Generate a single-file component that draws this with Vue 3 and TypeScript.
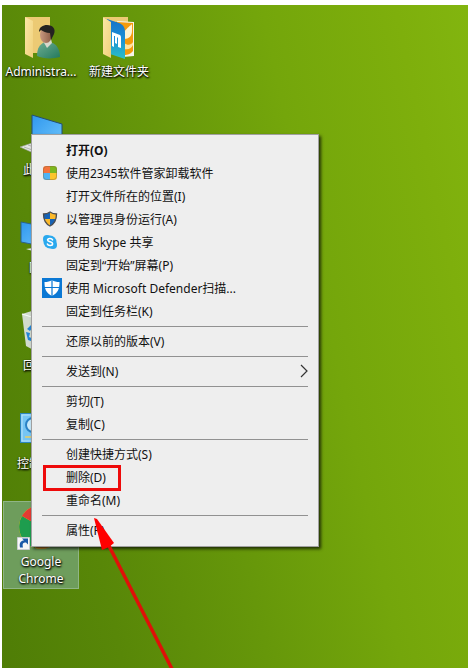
<script setup lang="ts">
type IconName =
  | 'user-folder' | 'app-folder' | 'computer' | 'network' | 'recycle' | 'control' | 'chrome'

interface Shortcut {
  label: string
  icon: IconName
  selected?: boolean
}

interface MenuItem {
  label: string
  icon?: 'manager' | 'uac' | 'skype' | 'defender'
  bold?: boolean
  submenu?: boolean
  marked?: boolean
}

const columns: Shortcut[][] = [
  [
    { label: 'Administra...', icon: 'user-folder' },
    { label: '此电脑', icon: 'computer' },
    { label: '网络', icon: 'network' },
    { label: '回收站', icon: 'recycle' },
    { label: '控制面板', icon: 'control' },
    { label: 'Google Chrome', icon: 'chrome', selected: true },
  ],
  [{ label: '新建文件夹', icon: 'app-folder' }],
]

const groups: MenuItem[][] = [
  [
    { label: '打开(O)', bold: true },
    { label: '使用2345软件管家卸载软件', icon: 'manager' },
    { label: '打开文件所在的位置(I)' },
    { label: '以管理员身份运行(A)', icon: 'uac' },
    { label: '使用 Skype 共享', icon: 'skype' },
    { label: '固定到“开始”屏幕(P)' },
    { label: '使用 Microsoft Defender扫描...', icon: 'defender' },
    { label: '固定到任务栏(K)' },
  ],
  [{ label: '还原以前的版本(V)' }],
  [{ label: '发送到(N)', submenu: true }],
  [{ label: '剪切(T)' }, { label: '复制(C)' }],
  [{ label: '创建快捷方式(S)' }, { label: '删除(D)', marked: true }, { label: '重命名(M)' }],
  [{ label: '属性(R)' }],
]
</script>

<template>
  <main class="desktop">
    <div class="shortcuts">
      <div v-for="(column, c) in columns" :key="c" class="column">
        <button
          v-for="item in column"
          :key="item.label"
          type="button"
          class="shortcut"
          :class="{ selected: item.selected }"
        >
          <svg class="picture" viewBox="0 0 48 48" aria-hidden="true">
            <defs>
              <linearGradient id="flap" x1="0" y1="0" x2="1" y2="1">
                <stop offset="0" stop-color="#fbe7a6" />
                <stop offset="1" stop-color="#f0d07a" />
              </linearGradient>
              <linearGradient id="screen" x1="0" y1="0" x2="1" y2="1">
                <stop offset="0" stop-color="#2f97ee" />
                <stop offset="1" stop-color="#6cc4fb" />
              </linearGradient>
              <linearGradient id="page" x1="0" y1="0" x2="0" y2="1">
                <stop offset="0" stop-color="#1672c8" />
                <stop offset="0.5" stop-color="#1c8fd6" />
                <stop offset="1" stop-color="#2cc0c4" />
              </linearGradient>
              <linearGradient id="coat" x1="0" y1="0" x2="1" y2="1">
                <stop offset="0" stop-color="#6fae92" />
                <stop offset="1" stop-color="#23795d" />
              </linearGradient>
              <linearGradient id="face" x1="0" y1="0" x2="1" y2="0">
                <stop offset="0" stop-color="#c99a80" />
                <stop offset="1" stop-color="#8a5b45" />
              </linearGradient>
            </defs>
            <g v-if="item.icon === 'user-folder'">
              <path d="M8 4h25v36H15z" fill="#ecca74" />
              <path d="M8 4l8 4v37l-8-4z" fill="url(#flap)" />
              <path d="M20 43c0-8 3-12 8-14l8 1c5 3 7 8 7 14-7 2-17 2-23-1z" fill="url(#coat)" />
              <path d="M26 28l4 7 5-5-1-4h-6z" fill="#d9d8cc" />
              <ellipse cx="29" cy="22" rx="6" ry="8" fill="url(#face)" />
              <path d="M22 19c0-5 4-7 8-7 6 0 9 4 7 9l-3 6-1-7c-4 0-7-2-9-3z" fill="#252321" />
            </g>
            <g v-else-if="item.icon === 'app-folder'">
              <path d="M8 4h25v5H15z" fill="#ecca74" />
              <path d="M22 8l17 1v34l-11 1z" fill="#f7f4ea" />
              <path d="M22 9l16 1v28c-3 4-7 4-10 4z" fill="#f59a0c" />
              <path d="M29 19c4-5 6-6 8-8v7c0 5-3 8-8 8z" fill="#fff3d2" />
              <path d="M29 30c4 3 7 2 9-1v3c-2 4-5 5-9 4z" fill="#ffe3a0" />
              <path d="M12 6l12 4c5 2 6 5 6 10v26l-15-5z" fill="url(#page)" />
              <path d="M17 33V19l8 3c1 1 1 2 1 3v10l-3-1V25l-1-1v7l-2-1v-7l-1 0v11z" fill="#fff" />
              <path d="M8 4l8 5v36l-8-4z" fill="url(#flap)" />
            </g>
            <g v-else-if="item.icon === 'computer'">
              <path d="M3 36l12-4 20 7-14 5z" fill="#e4e6e2" stroke="#99a197" stroke-width=".6" />
              <path d="M7 36l14 5M11 34l15 5" stroke="#99a197" stroke-width=".7" />
              <path d="M15 4l30 9v20l-30-3z" fill="url(#screen)" stroke="#234e73" stroke-width="1" />
            </g>
            <g v-else-if="item.icon === 'network'">
              <path d="M4 13l26 5v20L4 33z" fill="url(#screen)" stroke="#2b638d" stroke-width="1" />
              <path d="M16 35v4l-7 1 10 3 8-3-5-1v-3z" fill="#dfe5e4" />
            </g>
            <g v-else-if="item.icon === 'recycle'">
              <path d="M5 7l13-4 24 4-5 36-15 3L9 39z" fill="#dce3e1" opacity=".92" />
              <path d="M5 7l16 5 21-5M21 12l1 34" fill="none" stroke="#f5faf8" stroke-width="1.2" />
              <path d="M10 22l5-5 6 6-3 1-3-3-2 3zM9 25l4 1-1 4 5 2v3l-6-2z" fill="#2285d6" />
            </g>
            <g v-else-if="item.icon === 'control'">
              <rect x="3.500" y="8.500" width="41" height="29" fill="#76c5f4" stroke="#2c86bd" />
              <rect x="5" y="10" width="38" height="26" fill="none" stroke="#b9e4fb" />
              <circle cx="16" cy="20" r="7" fill="#c9eafa" stroke="#2a82c5" stroke-width="2" />
              <path d="M8 32h11" stroke="#e9cd62" stroke-width="1.500" />
              <path d="M28 18h12M28 24h12" stroke="#fff" stroke-width="2" />
            </g>
            <g v-else>
              <circle cx="24" cy="24" r="22" fill="#fbc116" />
              <path d="M24 24L5 13a22 22 0 0 0 13 32z" fill="#1e9d4e" />
              <path d="M24 24L5 13a22 22 0 0 1 38 0z" fill="#e33b32" />
              <path d="M18 44.500l10-3 4 3a22 22 0 0 1-14 0z" fill="#b77c2b" />
              <circle cx="24" cy="24" r="10" fill="#fff" />
              <circle cx="24" cy="24" r="8" fill="#3f7de0" />
              <path d="M.5 34.500h12v12H.5z" fill="#f7f7f7" stroke="#c9cdd0" />
              <path d="M3 44.500c-1-5 1-7 4-7l-2-2h6v6l-2-2c-3 0-4 1-3 5z" fill="#1b5aa8" />
            </g>
          </svg>
          <span class="caption">{{ item.label }}</span>
        </button>
      </div>
    </div>

    <div class="menu" role="menu">
      <div v-for="(group, g) in groups" :key="g" class="group" role="group">
        <button
          v-for="item in group"
          :key="item.label"
          type="button"
          role="menuitem"
          class="item"
          :class="{ bold: item.bold, marked: item.marked }"
        >
          <span class="slot">
            <svg v-if="item.icon === 'manager'" width="16" height="16" viewBox="0 0 16 16">
              <clipPath id="tile"><rect x="1" y="1" width="14" height="14" rx="3" /></clipPath>
              <g clip-path="url(#tile)">
                <path d="M1 1h7v7H1z" fill="#f4733c" />
                <path d="M8 1h7v7H8z" fill="#7cb81e" />
                <path d="M1 8h7v7H1z" fill="#4fb4f5" />
                <path d="M8 8h7v7H8z" fill="#fcc52b" />
              </g>
              <rect x="1.500" y="1.500" width="13" height="13" rx="3" fill="none" stroke="#8a6a3a" stroke-opacity=".45" />
            </svg>
            <svg v-else-if="item.icon === 'uac'" width="16" height="16" viewBox="0 0 16 16">
              <clipPath id="guard"><path d="M8 1c2 1.500 4 2 6.500 2 0 6-1.500 9.500-6.500 12C3 12.500 1.500 9 1.500 3 4 3 6 2.500 8 1z" /></clipPath>
              <g clip-path="url(#guard)">
                <path d="M0 0h8v8H0zM8 8h8v8H8z" fill="#1663b5" />
                <path d="M8 0h8v8H8zM0 8h8v8H0z" fill="#fbb92a" />
              </g>
              <path d="M8 1c2 1.500 4 2 6.500 2 0 6-1.500 9.500-6.500 12C3 12.500 1.500 9 1.500 3 4 3 6 2.500 8 1z" fill="none" stroke="#4c4d50" stroke-width="1.300" />
            </svg>
            <svg v-else-if="item.icon === 'skype'" width="16" height="16" viewBox="0 0 16 16">
              <circle cx="5" cy="5" r="4" fill="#2aa9ee" />
              <circle cx="11" cy="11" r="4" fill="#2aa9ee" />
              <circle cx="8" cy="8" r="6.500" fill="#2aa9ee" />
              <path d="M10.500 5.800C9.800 4 5.600 4 5.600 6.100c0 2.200 5 1.300 5 3.700 0 2.300-4.500 2.300-5.200.3" fill="none" stroke="#fff" stroke-width="1.600" stroke-linecap="round" />
            </svg>
            <svg v-else-if="item.icon === 'defender'" width="20" height="20" viewBox="0 0 20 20">
              <path d="M0 0h20v20H0z" fill="#0b78d4" />
              <path d="M10 2c2 1.500 4.500 2 7.500 2 0 7-1.500 11-7.500 14C4 15 2.500 11 2.500 4c3 0 5.500-.5 7.500-2z" fill="#fff" />
              <path d="M10 2v16M2 9.500h16" stroke="#0b78d4" stroke-width="1.200" />
            </svg>
          </span>
          <span>{{ item.label }}</span>
          <svg v-if="item.submenu" class="chevron" width="10" height="14" viewBox="0 0 10 14">
            <path d="M2 1l6 6-6 6" fill="none" stroke="#333" stroke-width="1.200" />
          </svg>
        </button>
      </div>
    </div>

    <svg class="arrow" width="82" height="151" viewBox="0 0 82 151" aria-hidden="true">
      <path d="M15 26l64 125" stroke="#e01008" stroke-width="3.500" />
      <path d="M1 0l3 1 17 24-5 4-7 3z" fill="#f00" />
    </svg>
  </main>
</template>

<style>
body {
  margin: 0;
  background: #fff;
}
</style>

<style scoped>
.desktop {
  position: relative;
  box-sizing: border-box;
  min-height: calc(100vh - 5px);
  margin: 5px 0 0 2px;
  padding: 6px 1px;
  overflow: hidden;
  background: linear-gradient(78deg, #4f7d06 0%, #588708 20%, #66970a 44%, #74a60b 66%, #7eaf0c 88%, #82b50f 100%);
  color: #111;
  font-family: "Noto Sans", "Noto Sans CJK SC", sans-serif;
  font-size: 12px;
}

.shortcuts {
  display: flex;
  gap: 2px;
}

.column {
  display: flex;
  flex-direction: column;
  gap: 10px;
}

.shortcut {
  box-sizing: border-box;
  display: flex;
  flex-direction: column;
  align-items: center;
  gap: 2px;
  width: 76px;
  height: 88px;
  padding: 1px 0 0;
  border: 1px solid transparent;
  background: none;
  color: #fff;
  font: inherit;
  line-height: 17px;
  text-shadow: 1px 1px 2px #000, 0 1px 2px #000;
}

.shortcut.selected {
  border-color: #8fb585;
  background: #6e9d5c;
}

.picture {
  flex: none;
  width: 48px;
  height: 48px;
}

.menu {
  position: absolute;
  top: 129px;
  left: 29px;
  box-sizing: border-box;
  width: 288px;
  padding: 4px 0;
  border: 1px solid #a0a0a0;
  background: #eee;
  box-shadow: 2px 2px 3px rgba(0, 0, 0, 0.7);
}

.group + .group::before {
  content: "";
  display: block;
  height: 1px;
  margin: 3px 10px;
  background: #919191;
}

.item {
  position: relative;
  display: flex;
  align-items: center;
  gap: 4px;
  width: 100%;
  height: 23px;
  padding: 0 9px 2px 10px;
  border: 0;
  background: none;
  color: inherit;
  font: inherit;
  text-align: left;
  white-space: nowrap;
}

.item.bold {
  font-weight: 700;
}

.item.marked::after {
  content: "";
  position: absolute;
  top: -1px;
  left: 11px;
  box-sizing: border-box;
  width: 78px;
  height: 26px;
  border: 3px solid #ee0a0a;
}

.slot {
  display: flex;
  width: 20px;
}

.chevron {
  margin-left: auto;
}

.arrow {
  position: absolute;
  top: 513px;
  left: 91px;
}
</style>
